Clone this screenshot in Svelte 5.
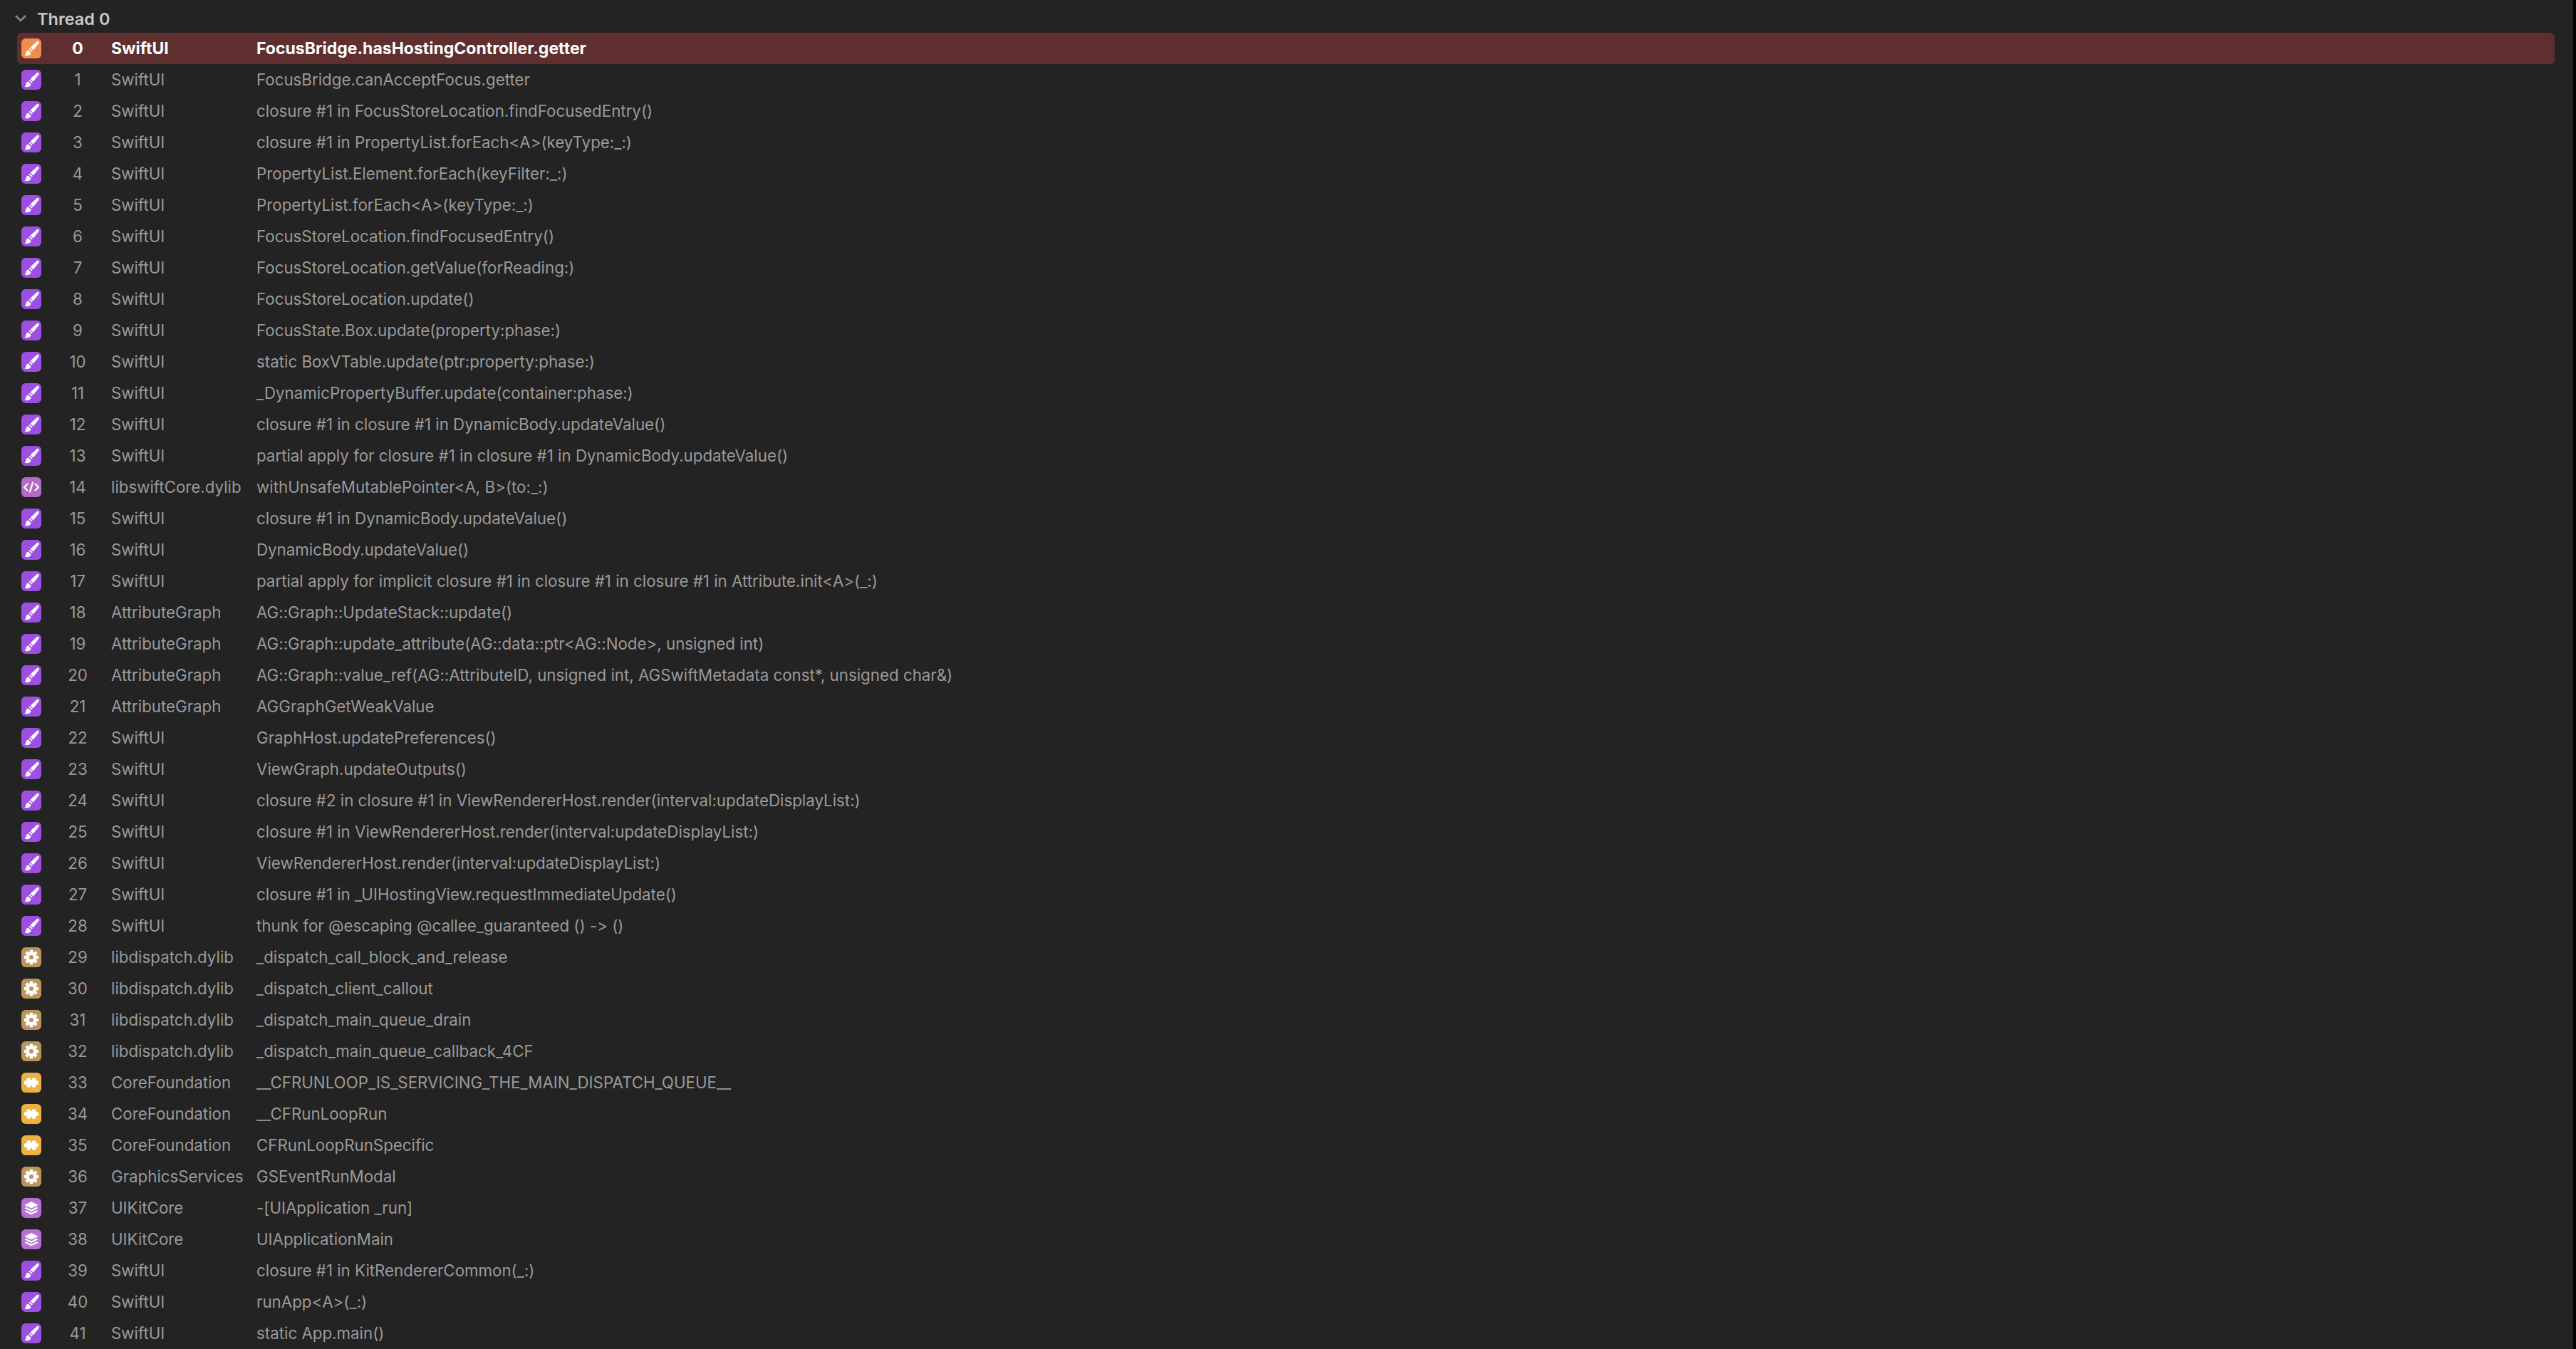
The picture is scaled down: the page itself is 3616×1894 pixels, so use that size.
<script>
    const frames = [
        ['brush', 'SwiftUI', 'FocusBridge.hasHostingController.getter'],
        ['brush', 'SwiftUI', 'FocusBridge.canAcceptFocus.getter'],
        ['brush', 'SwiftUI', 'closure #1 in FocusStoreLocation.findFocusedEntry()'],
        ['brush', 'SwiftUI', 'closure #1 in PropertyList.forEach<A>(keyType:_:)'],
        ['brush', 'SwiftUI', 'PropertyList.Element.forEach(keyFilter:_:)'],
        ['brush', 'SwiftUI', 'PropertyList.forEach<A>(keyType:_:)'],
        ['brush', 'SwiftUI', 'FocusStoreLocation.findFocusedEntry()'],
        ['brush', 'SwiftUI', 'FocusStoreLocation.getValue(forReading:)'],
        ['brush', 'SwiftUI', 'FocusStoreLocation.update()'],
        ['brush', 'SwiftUI', 'FocusState.Box.update(property:phase:)'],
        ['brush', 'SwiftUI', 'static BoxVTable.update(ptr:property:phase:)'],
        ['brush', 'SwiftUI', '_DynamicPropertyBuffer.update(container:phase:)'],
        ['brush', 'SwiftUI', 'closure #1 in closure #1 in DynamicBody.updateValue()'],
        ['brush', 'SwiftUI', 'partial apply for closure #1 in closure #1 in DynamicBody.updateValue()'],
        ['code', 'libswiftCore.dylib', 'withUnsafeMutablePointer<A, B>(to:_:)'],
        ['brush', 'SwiftUI', 'closure #1 in DynamicBody.updateValue()'],
        ['brush', 'SwiftUI', 'DynamicBody.updateValue()'],
        ['brush', 'SwiftUI', 'partial apply for implicit closure #1 in closure #1 in closure #1 in Attribute.init<A>(_:)'],
        ['brush', 'AttributeGraph', 'AG::Graph::UpdateStack::update()'],
        ['brush', 'AttributeGraph', 'AG::Graph::update_attribute(AG::data::ptr<AG::Node>, unsigned int)'],
        ['brush', 'AttributeGraph', 'AG::Graph::value_ref(AG::AttributeID, unsigned int, AGSwiftMetadata const*, unsigned char&)'],
        ['brush', 'AttributeGraph', 'AGGraphGetWeakValue'],
        ['brush', 'SwiftUI', 'GraphHost.updatePreferences()'],
        ['brush', 'SwiftUI', 'ViewGraph.updateOutputs()'],
        ['brush', 'SwiftUI', 'closure #2 in closure #1 in ViewRendererHost.render(interval:updateDisplayList:)'],
        ['brush', 'SwiftUI', 'closure #1 in ViewRendererHost.render(interval:updateDisplayList:)'],
        ['brush', 'SwiftUI', 'ViewRendererHost.render(interval:updateDisplayList:)'],
        ['brush', 'SwiftUI', 'closure #1 in _UIHostingView.requestImmediateUpdate()'],
        ['brush', 'SwiftUI', 'thunk for @escaping @callee_guaranteed () -> ()'],
        ['gear', 'libdispatch.dylib', '_dispatch_call_block_and_release'],
        ['gear', 'libdispatch.dylib', '_dispatch_client_callout'],
        ['gear', 'libdispatch.dylib', '_dispatch_main_queue_drain'],
        ['gear', 'libdispatch.dylib', '_dispatch_main_queue_callback_4CF'],
        ['puzzle', 'CoreFoundation', '__CFRUNLOOP_IS_SERVICING_THE_MAIN_DISPATCH_QUEUE__'],
        ['puzzle', 'CoreFoundation', '__CFRunLoopRun'],
        ['puzzle', 'CoreFoundation', 'CFRunLoopRunSpecific'],
        ['gear', 'GraphicsServices', 'GSEventRunModal'],
        ['stack', 'UIKitCore', '-[UIApplication _run]'],
        ['stack', 'UIKitCore', 'UIApplicationMain'],
        ['brush', 'SwiftUI', 'closure #1 in KitRendererCommon(_:)'],
        ['brush', 'SwiftUI', 'runApp<A>(_:)'],
        ['brush', 'SwiftUI', 'static App.main()']
    ];

    const gearTeeth = [0, 45, 90, 135];
</script>

<style>
    :global(body) {
        background: #232323;
        overflow: hidden;
    }
    .page {
        width: 3616px;
        height: 1894px;
        display: flex;
        overflow: hidden;
        font-family: Inter, "Liberation Sans", sans-serif;
        font-size: 22.3px;
        font-feature-settings: "calt" 0;
        font-variant-ligatures: none;
        color: #9a9a9a;
    }
    .list {
        flex: 1;
        min-width: 0;
        padding: 0 26px 0 24px;
    }
    .edge {
        width: 4px;
        background: #000;
    }
    .thread {
        height: 46px;
        display: flex;
        align-items: center;
        gap: 14px;
        padding-top: 6px;
        margin-left: -4px;
        box-sizing: border-box;
        font-size: 23.5px;
        font-weight: 600;
        color: #c8c8c8;
    }
    .chevron {
        width: 18px;
        height: 12px;
        fill: none;
        stroke: #8a8a8a;
        stroke-width: 2.5;
    }
    .row {
        height: 44px;
        display: flex;
        align-items: center;
        padding-left: 6px;
        border-radius: 6px;
        white-space: nowrap;
    }
    .row span {
        padding-bottom: 1px;
    }
    .row.active {
        background: #5f2e2e;
        color: #fff;
        font-size: 23px;
        font-weight: 700;
    }
    .icon {
        width: 28px;
        height: 28px;
        flex: none;
        border-radius: 6px;
        display: block;
    }
    .brush { background: #9c4fe0; }
    .active .brush { background: #f08c4c; }
    .code { background: #b56ac8; }
    .gear { background: #bd955a; }
    .puzzle { background: #edb042; }
    .stack { background: #b96fd2; }
    .num {
        width: 50px;
        margin: 0 22px 0 26px;
        text-align: center;
    }
    .lib {
        width: 204px;
        flex: none;
    }
</style>

<div class="page">
    <div class="list">
        <div class="thread">
            <svg class="chevron" viewBox="0 0 18 12"><path d="M2 2l7 7 7-7" /></svg>
            <span>Thread 0</span>
        </div>
        {#each frames as [kind, lib, symbol], i}
            <div class="row" class:active={i === 0}>
                <svg class="icon {kind}" viewBox="0 0 28 28">
                    {#if kind === 'brush'}
                        <path fill="#fff" d="M24.500 4.200c.9.8.3 2.200-.4 3.100l-7.400 9.300-4.200-3.800 8.400-7.900c1-.9 2.700-1.500 3.600-.7z" />
                        <path fill="#fff" d="M11.800 13.700l4 3.600-1.200 1.500-4.100-3.700z" />
                        <path fill="#fff" d="M9.500 16.500l4 3.700c-.3 3-3.500 4.800-9 3.600 1.800-1.200 1.600-3 2.300-4.800.5-1.300 1.500-2.300 2.700-2.500z" />
                    {:else if kind === 'code'}
                        <path fill="none" stroke="#fff" stroke-width="2.200" stroke-linecap="round" stroke-linejoin="round" d="M8.500 9.500L4 14l4.500 4.500M19.500 9.500L24 14l-4.500 4.500M16 7.500l-4 13" />
                    {:else if kind === 'gear'}
                        {#each gearTeeth as angle}
                            <rect x="11.700" y="3.800" width="4.600" height="20.400" rx="1" fill="#fff" transform="rotate({angle} 14 14)" />
                        {/each}
                        <circle cx="14" cy="14" r="7.600" fill="#fff" />
                        <circle cx="14" cy="14" r="3.100" fill="#bd955a" />
                    {:else if kind === 'puzzle'}
                        <path fill="#fff" d="M8.500 7.500H13V10h2V7.500h4.500c.6 0 1 .4 1 1v2.800h2.200c.8 0 1.300.6 1.300 1.300v2.800c0 .7-.5 1.300-1.300 1.300h-2.200v2.800c0 .6-.4 1-1 1H15V18h-2v2.500H8.500c-.6 0-1-.4-1-1v-2.800H5.300c-.8 0-1.300-.6-1.300-1.300v-2.800c0-.7.5-1.300 1.300-1.300h2.200V8.500c0-.6.4-1 1-1z" />
                    {:else}
                        <path fill="#fff" d="M14 5l9 4.400c.4.2.4.6 0 .8L14 14.600 5 10.200c-.4-.2-.4-.6 0-.8z" />
                        <path fill="#fff" d="M6.700 12.800L14 16.400l7.300-3.600 1.700.9c.4.2.4.600 0 .8L14 19 5 14.500c-.4-.2-.4-.6 0-.8z" />
                        <path fill="#fff" d="M6.700 17.200L14 20.800l7.300-3.600 1.700.9c.4.2.4.600 0 .8L14 23.400 5 18.900c-.4-.2-.4-.6 0-.8z" />
                    {/if}
                </svg>
                <span class="num">{i}</span>
                <span class="lib">{lib}</span>
                <span>{symbol}</span>
            </div>
        {/each}
    </div>
    <div class="edge"></div>
</div>
